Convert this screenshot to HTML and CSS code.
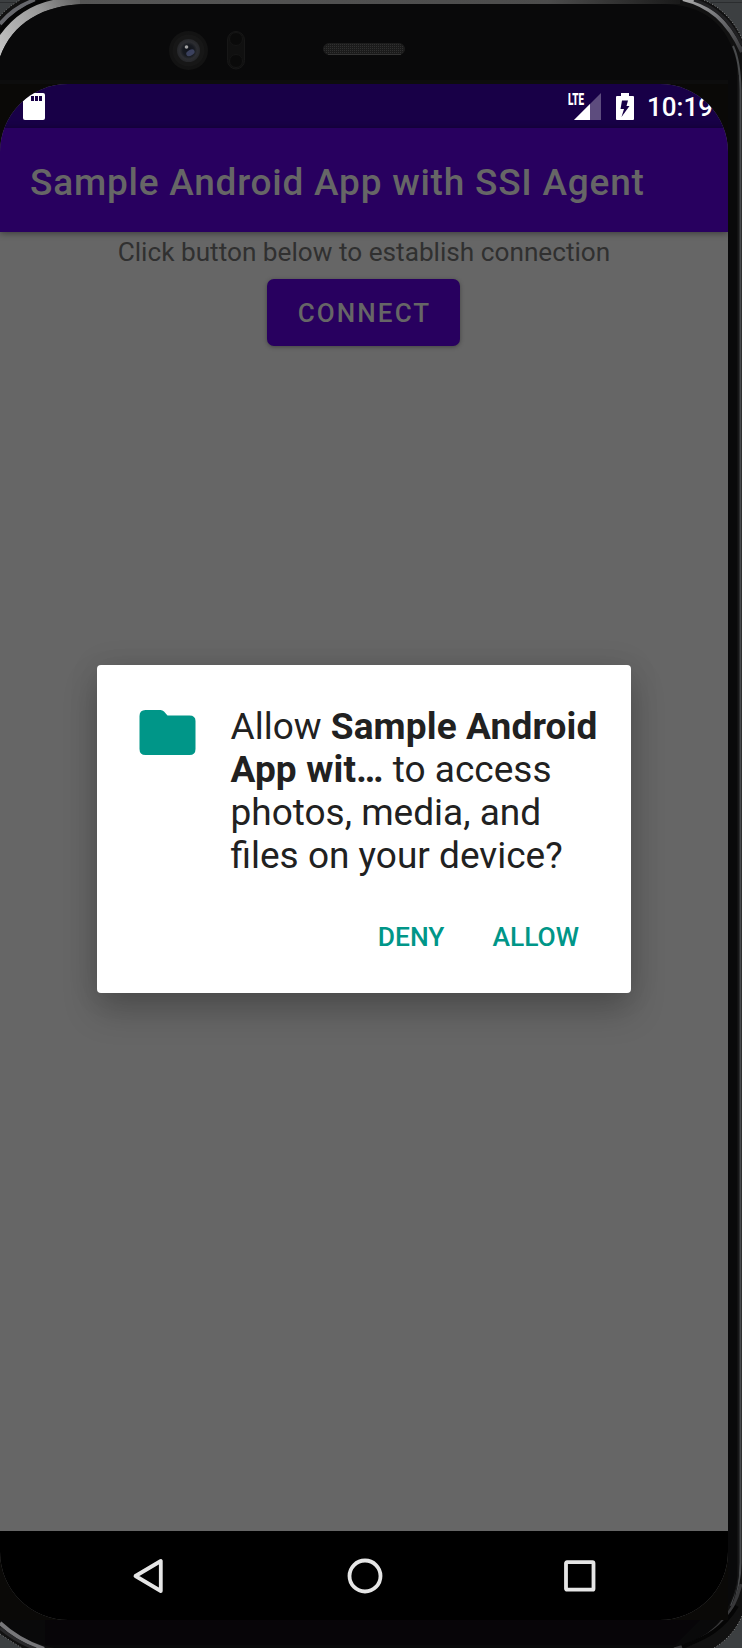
FILE: index.html
```html
<!DOCTYPE html>
<html lang="en">
<head>
<meta charset="utf-8">
<title>Sample Android App with SSI Agent</title>
<link rel="stylesheet" href="styles.css">
</head>
<body>
<div class="device">
  <svg class="frame" viewBox="0 0 742 1648" aria-hidden="true">
    <defs>
      <linearGradient id="rim" x1="0" y1="55" x2="90" y2="0" gradientUnits="userSpaceOnUse">
        <stop offset="0" stop-color="#c4c4c4"/><stop offset=".55" stop-color="#989898"/><stop offset="1" stop-color="#555"/>
      </linearGradient>
      <linearGradient id="top" x1="0" x2="1"><stop offset="0" stop-color="#555"/><stop offset=".78" stop-color="#4c4c4c"/><stop offset="1" stop-color="#1a1a1a"/></linearGradient>
      <linearGradient id="corner" x1="683" y1="0" x2="742" y2="60" gradientUnits="userSpaceOnUse"><stop offset="0" stop-color="#aaa"/><stop offset=".4" stop-color="#77787b"/><stop offset="1" stop-color="#303032"/></linearGradient>
      <radialGradient id="lens" cx=".5" cy=".5" r=".5"><stop offset="0" stop-color="#10131c"/><stop offset=".5" stop-color="#171a20"/><stop offset=".75" stop-color="#2c2d31"/><stop offset="1" stop-color="#26272a"/></radialGradient>
      <pattern id="mesh" width="2" height="2" patternUnits="userSpaceOnUse"><rect width="2" height="2" fill="#1b1b1b"/><rect width="1" height="1" fill="#303030"/></pattern>
    </defs>
    <rect width="742" height="1648" fill="#3c3f41"/>
    <path d="M0 2.500H18M706 2.500H742" stroke="#2b2d2f"/>
    <path d="M0 16Q8 7 20 0H704C723 8 736 24 742 39V1616C736 1630 726 1641 714 1648H22Q12 1642 0 1634Z" fill="#111"/>
    <path d="M0 16Q8 7 20 0M704 0C723 8 736 24 742 39M742 1616C736 1630 726 1641 714 1648M0 1634Q12 1642 22 1648" fill="none" stroke="#888" stroke-dasharray="1 2"/>
    <path d="M0 24Q14 7 35 0" fill="none" stroke="#66676c" stroke-width="4"/>
    <path d="M0 32Q16 9 46 0" fill="none" stroke="#050505" stroke-width="5"/>
    <path d="M0 35Q20 7 53 0H250V4H88C42 4 12 24 0 57Z" fill="url(#rim)"/>
    <rect x="80" width="600" height="4" fill="url(#top)"/>
    <path d="M0 57C12 24 42 4 88 4H660C704 4 728 24 737 64V1580C729 1620 704 1643 675 1648H55Q20 1641 0 1620Z" fill="#09090a"/>
    <path d="M683 -1C709 5 728 21 742 52" fill="none" stroke="url(#corner)" stroke-width="4"/>
    <path d="M694 0C716 7 732 22 742 45" fill="none" stroke="#202022" stroke-width="3"/>
    <path d="M733 46Q740 61 740.500 90V1560Q741 1585 731 1606" fill="none" stroke="#484a4c" stroke-width="2"/>
    <path d="M738.500 75V1575Q736 1600 728 1614" fill="none" stroke="#171719"/>
    <path d="M741 1584C733 1617 711 1640 674 1649" fill="none" stroke="#38383a" stroke-width="3"/>
    <path d="M737 1606C723 1628 709 1637 682 1647" fill="none" stroke="#050505" stroke-width="4"/>
    <path d="M0 1623Q18 1640 44 1649" fill="none" stroke="#77777a" stroke-width="4"/>
    <path d="M0 1628Q16 1642 36 1649" fill="none" stroke="#29292b" stroke-width="3"/>
    <path d="M45 1620H700L675 1645H45Z" fill="#070508"/>
    <rect y="80" width="728" height="4" fill="#0d0d0d"/>
    <path d="M0 84H728V1620H0Z" fill="#0a0907"/>
    <circle cx="188.5" cy="50.5" r="19.5" fill="#131313"/><circle cx="188.5" cy="50.5" r="16" fill="#171717"/>
    <circle cx="188.5" cy="50.5" r="11.500" fill="url(#lens)"/><ellipse cx="190.5" cy="53" rx="4.500" ry="2.800" fill="#4c5277" opacity=".7" transform="rotate(-30 190 53)"/><circle cx="186.5" cy="47" r="1.800" fill="#a2a2a2"/>
    <rect x="227.5" y="31.500" width="17" height="37.500" rx="8.500" fill="#101010" stroke="#171717"/><circle cx="236" cy="39" r="6.500" fill="#0a0a0a" stroke="#151515"/><circle cx="236" cy="61" r="6.500" fill="#0a0a0a" stroke="#151515"/>
    <rect x="323.500" y="43.500" width="81" height="11" rx="5.500" fill="url(#mesh)" stroke="#1c1c1c"/><path d="M328 54.500H401" stroke="#343434"/>
  </svg>

  <main class="screen">
    <header class="status">
      <svg class="sd" viewBox="0 0 22 27"><path d="M8 0H20Q22 0 22 2V25Q22 27 20 27H2Q0 27 0 25V8Z" fill="#fff"/><path d="M8 3h3v5H8zM12 3h3v5h-3zM16 3h3v5h-3z" fill="#180047"/></svg>
      <div class="indicators">
        <div class="network">
          <span class="lte">LTE</span>
          <svg class="signal" viewBox="0 0 27 27"><path d="M27 0V27H0Z" fill="#5d4c7e"/><path d="M16 11V27H0Z" fill="#fff"/></svg>
        </div>
        <svg class="battery" viewBox="0 0 18 27"><path d="M5 0H13V3H17Q18 3 18 4V26Q18 27 17 27H1Q0 27 0 26V4Q0 3 1 3H5Z" fill="#fff"/><path d="M6 7.500H12L10.500 13H13.500L5.500 24L8 16H4.500Z" fill="#180047"/></svg>
        <span class="time">10:19</span>
      </div>
    </header>
    <div class="appbar"><h1>Sample Android App with SSI Agent</h1></div>
    <section class="content">
      <p class="hint">Click button below to establish connection</p>
      <button class="connect">CONNECT</button>
      <div class="dialog" role="dialog">
        <div class="request">
          <svg class="folder" viewBox="0 0 56 45"><path d="M6 0H21Q23 0 24.500 1.500L28 5.500H50Q56 5.500 56 11V39Q56 45 50 45H6Q0 45 0 39V6Q0 0 6 0Z" fill="#009688"/></svg>
          <p class="message">Allow <b>Sample Android<br>App wit…</b> to access<br>photos, media, and<br>files on your device?</p>
        </div>
        <div class="actions"><button>DENY</button><button>ALLOW</button></div>
      </div>
    </section>
    <nav class="nav">
      <svg viewBox="0 0 40 40"><path d="M6.500 20L31.800 5V35Z"/></svg>
      <svg viewBox="0 0 40 40"><circle cx="20" cy="20" r="15.500"/></svg>
      <svg viewBox="0 0 40 40"><rect x="6" y="6.200" width="27.500" height="27.500" rx="1"/></svg>
    </nav>
  </main>
</div>
</body>
</html>
```

FILE: styles.css
```css
* { box-sizing: border-box; }
body { margin: 0; background: #050505; font-family: Roboto, sans-serif; }
p, h1 { margin: 0; }
button { border: 0; background: none; font-family: inherit; padding: 0; }
svg { display: block; flex: none; }
.device { position: relative; width: 742px; height: 1648px; padding-top: 84px; overflow: hidden; }
.frame { position: absolute; inset: 0; width: 742px; height: 1648px; }
.screen { position: relative; display: flex; flex-direction: column; width: 728px; height: 1536px; border-radius: 68px; overflow: hidden; background: #666; }
.status { display: flex; justify-content: space-between; height: 44px; padding: 9px 15px 0 23px; background: #180047; }
.sd { width: 22px; height: 27px; }
.indicators { display: flex; align-items: flex-start; }
.network { position: relative; width: 34px; height: 27px; margin-right: 14px; }
.signal { width: 27px; height: 27px; margin-left: 6px; }
.lte { position: absolute; left: 0; top: 0; color: #fff; font-size: 16.500px; line-height: 13px; font-weight: 900; transform: scaleX(.6); transform-origin: left; }
.battery { width: 18px; height: 27px; margin-right: 13px; }
.time { color: #fff; font-size: 26px; line-height: 28px; font-weight: 500; width: 66px; white-space: nowrap; }
.appbar { position: relative; z-index: 1; display: flex; align-items: center; height: 104px; padding: 6px 30px 0; background: #28005f; box-shadow: 0 1px 7px rgba(0,0,0,.45); }
h1 { color: #666; font-size: 37px; line-height: 44px; font-weight: 500; letter-spacing: .770px; white-space: nowrap; }
.content { display: flex; flex-direction: column; align-items: center; flex: 1; }
.hint { margin-top: 5px; color: #303030; font-size: 26.200px; line-height: 31px; white-space: nowrap; }
.connect { width: 193px; height: 67px; margin: 11px 1px 0 0; padding-left: 2px; border-radius: 7px; background: #28005f; color: #666; font-size: 26px; font-weight: 500; letter-spacing: 2.100px; box-shadow: 0 1px 4px rgba(0,0,0,.35); }
.dialog { width: 534px; height: 328px; margin-top: 319px; padding: 40px 24px 0 42px; border-radius: 4px; background: #fff; box-shadow: 0 18px 34px rgba(0,0,0,.22), 0 1px 30px rgba(0,0,0,.1); }
.request { display: flex; gap: 34.500px; }
.folder { width: 57px; height: 45px; margin-top: 5px; }
.message { color: #212121; font-size: 37px; line-height: 43px; white-space: nowrap; }
.message b { font-weight: 700; letter-spacing: .140px; }
.actions { display: flex; justify-content: flex-end; gap: 48px; margin-top: 42px; padding-right: 28px; }
.actions button { color: #009688; font-size: 26.400px; line-height: 36px; font-weight: 500; }
.nav { display: flex; justify-content: space-between; align-items: center; height: 89px; padding: 0 128px 0 129px; background: #000; }
.nav svg { width: 40px; height: 40px; fill: none; stroke: #e6e6e6; stroke-width: 3.800px; stroke-linejoin: round; }
```
